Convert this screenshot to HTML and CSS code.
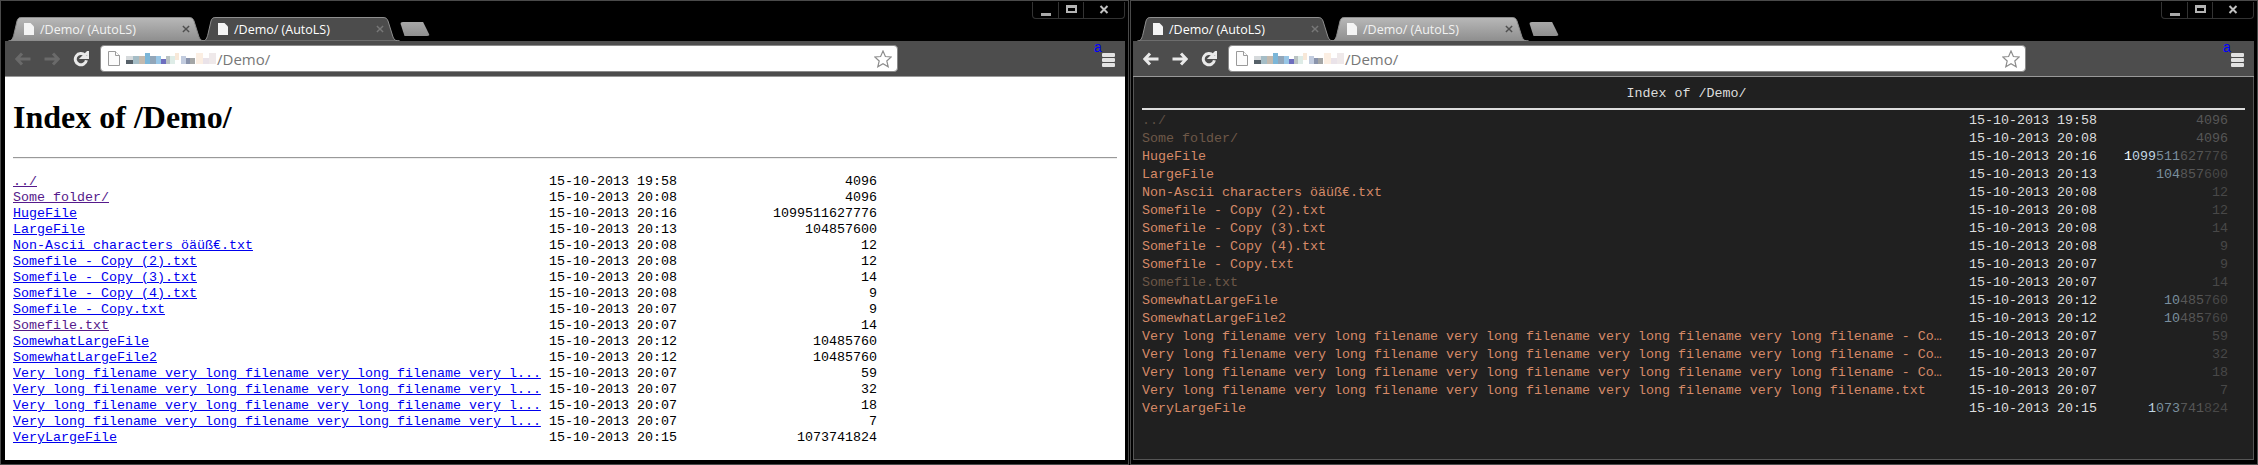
FILE: index.html
```html
<!DOCTYPE html>
<html>
<head>
    <title>/Demo/ (AutoLS)</title>
    <link rel="stylesheet" href="styles.css">
</head>
<body>
    <!-- Shared icons -->
    <svg class="defs" width="0" height="0">
        <linearGradient id="tab-fill" x1="0" y1="0" x2="0" y2="1">
            <stop offset="0" stop-color="#b8b8b8"/>
            <stop offset="1" stop-color="#8e8e8e"/>
        </linearGradient>
        <symbol id="i-tab" viewBox="0 0 198 24" preserveAspectRatio="none">
            <path d="M0.5 24 C4 24 5 21 6 17 L9 4 C10 1 11 0.5 14 0.5 H181 C184 0.5 185 1.5 186 4 L191 20 C192 23 194 24 197.5 24 Z"/>
        </symbol>
        <symbol id="i-page" viewBox="0 0 10 12">
            <path d="M0 0 H6.5 L10 3.5 V12 H0 Z"/>
        </symbol>
        <symbol id="i-x" viewBox="0 0 9 9">
            <path d="M1 1 L8 8 M8 1 L1 8"/>
        </symbol>
        <symbol id="i-back" viewBox="0 0 16 14">
            <path d="M7 1.5 L1.8 7 L7 12.5 M2 7 H15.5"/>
        </symbol>
        <symbol id="i-forward" viewBox="0 0 16 14">
            <path d="M9 1.5 L14.2 7 L9 12.5 M14 7 H0.5"/>
        </symbol>
        <symbol id="i-reload" viewBox="0 0 16 16">
            <path class="arc" d="M12 4.4 A5.6 5.6 0 1 0 13.4 9.2"/>
            <path class="head" d="M9.5 6.6 L15.6 6.6 L15.6 0.6 Z"/>
        </symbol>
        <symbol id="i-doc" viewBox="0 0 12 15">
            <path d="M0.5 0.5 H7.5 L11.5 4.5 V14.5 H0.5 Z"/>
            <path d="M7.5 0.5 V4.5 H11.5"/>
        </symbol>
        <symbol id="i-star" viewBox="0 0 18 18">
            <path d="M9 1 L11.4 6.5 L17.2 7 L12.8 11 L14.2 16.8 L9 13.7 L3.8 16.8 L5.2 11 L0.8 7 L6.6 6.5 Z"/>
        </symbol>
        <symbol id="i-host" viewBox="0 0 91 12">
            <rect x="0" y="3" width="7" height="4" fill="#cdd2d4"/>
            <rect x="0" y="7" width="7" height="4" fill="#2c3a44"/>
            <rect x="7" y="3" width="6" height="8" fill="#8fadb8"/>
            <rect x="13" y="3" width="7" height="8" fill="#b5aa9c"/>
            <rect x="19" y="0" width="5" height="11" fill="#5ba5cf"/>
            <rect x="24" y="3" width="6" height="8" fill="#7890a8"/>
            <rect x="30" y="3" width="5" height="8" fill="#7fb9e0"/>
            <rect x="35" y="6" width="5" height="5" fill="#4a4bae"/>
            <rect x="40" y="3" width="4" height="8" fill="#a9b5b5"/>
            <rect x="44" y="3" width="5" height="8" fill="#d6e8e2"/>
            <rect x="49" y="0" width="4" height="7" fill="#f7e3cf"/>
            <rect x="55" y="3" width="5" height="8" fill="#b4c0d8"/>
            <rect x="60" y="5" width="4" height="6" fill="#6d7a98"/>
            <rect x="64" y="5" width="5" height="6" fill="#8e9090"/>
            <rect x="70" y="0" width="7" height="11" fill="#fbeadb"/>
            <rect x="77" y="5" width="6" height="6" fill="#e5dde4"/>
            <rect x="83" y="0" width="7" height="11" fill="#ece4e6"/>
        </symbol>
    </svg>

    <!-- Left window: default listing -->
    <div class="window window-left">
        <div class="titlebar">
            <div class="tabs">
                <div class="tab">
                    <svg class="tab-bg"><use href="#i-tab" fill="url(#tab-fill)"/></svg>
                    <svg class="tab-icon"><use href="#i-page"/></svg>
                    <span class="tab-title">/Demo/ (AutoLS)</span>
                    <svg class="tab-close"><use href="#i-x"/></svg>
                </div>
                <div class="tab tab-active">
                    <svg class="tab-bg"><use href="#i-tab"/></svg>
                    <svg class="tab-icon"><use href="#i-page"/></svg>
                    <span class="tab-title">/Demo/ (AutoLS)</span>
                    <svg class="tab-close"><use href="#i-x"/></svg>
                </div>
                <div class="new-tab"></div>
            </div>
            <div class="caption">
                <div class="cap-btn cap-min"><span></span></div>
                <div class="cap-btn cap-max"><span></span></div>
                <div class="cap-btn cap-close"><svg><use href="#i-x"/></svg></div>
            </div>
        </div>
        <div class="toolbar">
            <svg class="nav nav-off"><use href="#i-back"/></svg>
            <svg class="nav nav-off"><use href="#i-forward"/></svg>
            <svg class="nav reload"><use href="#i-reload"/></svg>
            <div class="omnibox">
                <svg class="doc"><use href="#i-doc"/></svg>
                <svg class="host"><use href="#i-host"/></svg>
                <span class="path">/Demo/</span>
                <svg class="star"><use href="#i-star"/></svg>
            </div>
            <div class="menu"><span class="menu-badge">a</span><i></i><i></i><i></i></div>
        </div>
        <div class="page page-plain">
            <h1>Index of /Demo/</h1>
            <hr>
            <div class="listing">
                <div class="row"><a class="seen">../</a><span>15-10-2013 19:58</span><span class="size">4096</span></div>
                <div class="row"><a class="seen">Some folder/</a><span>15-10-2013 20:08</span><span class="size">4096</span></div>
                <div class="row"><a>HugeFile</a><span>15-10-2013 20:16</span><span class="size">1099511627776</span></div>
                <div class="row"><a>LargeFile</a><span>15-10-2013 20:13</span><span class="size">104857600</span></div>
                <div class="row"><a>Non-Ascii characters öäüß€.txt</a><span>15-10-2013 20:08</span><span class="size">12</span></div>
                <div class="row"><a>Somefile - Copy (2).txt</a><span>15-10-2013 20:08</span><span class="size">12</span></div>
                <div class="row"><a>Somefile - Copy (3).txt</a><span>15-10-2013 20:08</span><span class="size">14</span></div>
                <div class="row"><a>Somefile - Copy (4).txt</a><span>15-10-2013 20:08</span><span class="size">9</span></div>
                <div class="row"><a>Somefile - Copy.txt</a><span>15-10-2013 20:07</span><span class="size">9</span></div>
                <div class="row"><a class="seen">Somefile.txt</a><span>15-10-2013 20:07</span><span class="size">14</span></div>
                <div class="row"><a>SomewhatLargeFile</a><span>15-10-2013 20:12</span><span class="size">10485760</span></div>
                <div class="row"><a>SomewhatLargeFile2</a><span>15-10-2013 20:12</span><span class="size">10485760</span></div>
                <div class="row"><a>Very long filename very long filename very long filename very l...</a><span>15-10-2013 20:07</span><span class="size">59</span></div>
                <div class="row"><a>Very long filename very long filename very long filename very l...</a><span>15-10-2013 20:07</span><span class="size">32</span></div>
                <div class="row"><a>Very long filename very long filename very long filename very l...</a><span>15-10-2013 20:07</span><span class="size">18</span></div>
                <div class="row"><a>Very long filename very long filename very long filename very l...</a><span>15-10-2013 20:07</span><span class="size">7</span></div>
                <div class="row"><a>VeryLargeFile</a><span>15-10-2013 20:15</span><span class="size">1073741824</span></div>
            </div>
        </div>
    </div>

    <!-- Right window: AutoLS listing -->
    <div class="window window-right">
        <div class="titlebar">
            <div class="tabs">
                <div class="tab tab-active">
                    <svg class="tab-bg"><use href="#i-tab"/></svg>
                    <svg class="tab-icon"><use href="#i-page"/></svg>
                    <span class="tab-title">/Demo/ (AutoLS)</span>
                    <svg class="tab-close"><use href="#i-x"/></svg>
                </div>
                <div class="tab">
                    <svg class="tab-bg"><use href="#i-tab" fill="url(#tab-fill)"/></svg>
                    <svg class="tab-icon"><use href="#i-page"/></svg>
                    <span class="tab-title">/Demo/ (AutoLS)</span>
                    <svg class="tab-close"><use href="#i-x"/></svg>
                </div>
                <div class="new-tab"></div>
            </div>
            <div class="caption">
                <div class="cap-btn cap-min"><span></span></div>
                <div class="cap-btn cap-max"><span></span></div>
                <div class="cap-btn cap-close"><svg><use href="#i-x"/></svg></div>
            </div>
        </div>
        <div class="toolbar">
            <svg class="nav"><use href="#i-back"/></svg>
            <svg class="nav"><use href="#i-forward"/></svg>
            <svg class="nav reload"><use href="#i-reload"/></svg>
            <div class="omnibox">
                <svg class="doc"><use href="#i-doc"/></svg>
                <svg class="host"><use href="#i-host"/></svg>
                <span class="path">/Demo/</span>
                <svg class="star"><use href="#i-star"/></svg>
            </div>
            <div class="menu"><span class="menu-badge">a</span><i></i><i></i><i></i></div>
        </div>
        <div class="page page-dark">
            <div class="dark-title">Index of /Demo/</div>
            <hr>
            <div class="listing">
                <div class="row"><a class="faint">../</a><span>15-10-2013 19:58</span><span class="size"><b class="g1">4096</b></span></div>
                <div class="row"><a class="seen">Some folder/</a><span>15-10-2013 20:08</span><span class="size"><b class="g1">4096</b></span></div>
                <div class="row"><a>HugeFile</a><span>15-10-2013 20:16</span><span class="size"><b class="g4">1</b><b class="g3">099</b><b class="g2">511</b><b class="g1">627</b><b class="g0">776</b></span></div>
                <div class="row"><a>LargeFile</a><span>15-10-2013 20:13</span><span class="size"><b class="g2">104</b><b class="g1">857</b><b class="g0">600</b></span></div>
                <div class="row"><a>Non-Ascii characters öäüß€.txt</a><span>15-10-2013 20:08</span><span class="size"><b class="g0">12</b></span></div>
                <div class="row"><a>Somefile - Copy (2).txt</a><span>15-10-2013 20:08</span><span class="size"><b class="g0">12</b></span></div>
                <div class="row"><a>Somefile - Copy (3).txt</a><span>15-10-2013 20:08</span><span class="size"><b class="g0">14</b></span></div>
                <div class="row"><a>Somefile - Copy (4).txt</a><span>15-10-2013 20:08</span><span class="size"><b class="g0">9</b></span></div>
                <div class="row"><a>Somefile - Copy.txt</a><span>15-10-2013 20:07</span><span class="size"><b class="g0">9</b></span></div>
                <div class="row"><a class="seen">Somefile.txt</a><span>15-10-2013 20:07</span><span class="size"><b class="g0">14</b></span></div>
                <div class="row"><a>SomewhatLargeFile</a><span>15-10-2013 20:12</span><span class="size"><b class="g2">10</b><b class="g1">485</b><b class="g0">760</b></span></div>
                <div class="row"><a>SomewhatLargeFile2</a><span>15-10-2013 20:12</span><span class="size"><b class="g2">10</b><b class="g1">485</b><b class="g0">760</b></span></div>
                <div class="row"><a>Very long filename very long filename very long filename very long filename very long filename - Co…</a><span>15-10-2013 20:07</span><span class="size"><b class="g0">59</b></span></div>
                <div class="row"><a>Very long filename very long filename very long filename very long filename very long filename - Co…</a><span>15-10-2013 20:07</span><span class="size"><b class="g0">32</b></span></div>
                <div class="row"><a>Very long filename very long filename very long filename very long filename very long filename - Co…</a><span>15-10-2013 20:07</span><span class="size"><b class="g0">18</b></span></div>
                <div class="row"><a>Very long filename very long filename very long filename very long filename very long filename.txt</a><span>15-10-2013 20:07</span><span class="size"><b class="g0">7</b></span></div>
                <div class="row"><a>VeryLargeFile</a><span>15-10-2013 20:15</span><span class="size"><b class="g3">1</b><b class="g2">073</b><b class="g1">741</b><b class="g0">824</b></span></div>
            </div>
        </div>
    </div>
</body>
</html>
```

FILE: styles.css
```css
* {
    box-sizing: border-box;
}
html, body {
    margin: 0;
    height: 465px;
    overflow: hidden;
}
body {
    display: flex;
    justify-content: space-between;
    background-color: #000;
    font-family: "Liberation Mono", monospace;
}
.defs {
    position: absolute;
}

/* Window frame */
.window {
    display: flex;
    flex-direction: column;
    height: 465px;
    border: 1px solid #4a4a4a;
    background-color: #000;
}
.window-left {
    width: 1129px;
    padding: 0 3px 4px 4px;
}
.window-right {
    width: 1128px;
    padding: 0 3px 4px 2px;
}

/* Title bar and tabs */
.titlebar {
    display: flex;
    justify-content: space-between;
    height: 40px;
}
.tabs {
    display: flex;
    align-items: flex-end;
    padding-left: 3px;
}
.window-right .tabs {
    padding-left: 4px;
}
.tab {
    position: relative;
    display: flex;
    align-items: center;
    width: 198px;
    height: 24px;
    padding-left: 16px;
    margin-right: -4px;
    font-family: "Open Sans", sans-serif;
    font-size: 12.5px;
}
.tab-bg {
    position: absolute;
    left: 0;
    top: 0;
    width: 198px;
    height: 24px;
    stroke: #8a8a8a;
}
.tab-active {
    z-index: 1;
}
.tab-active .tab-bg {
    fill: #4c4c4c;
    stroke: #8f8f8f;
}
.tab-icon {
    position: relative;
    width: 10px;
    height: 12px;
    margin-right: 6px;
    fill: #f4f4f4;
}
.tab-title {
    position: relative;
    color: #f2f2f2;
    white-space: nowrap;
}
.tab-active .tab-title {
    color: #fff;
}
.tab-close {
    position: absolute;
    right: 16px;
    top: 8px;
    width: 8px;
    height: 8px;
    fill: none;
    stroke: #4f4f4f;
    stroke-width: 1.6;
}
.tab-active .tab-close {
    stroke: #777;
}
.new-tab {
    width: 30px;
    height: 14px;
    margin: 0 0 5px 4px;
    background: linear-gradient(#a8a8a8, #8e8e8e);
    border-radius: 3px;
    clip-path: polygon(0 0, 77% 0, 100% 100%, 15% 100%);
}

/* Caption buttons */
.caption {
    display: flex;
    height: 17px;
    margin-top: 1px;
    border: 1px solid #333;
    border-top: 0;
    border-radius: 0 0 4px 4px;
}
.cap-btn {
    display: flex;
    align-items: center;
    justify-content: center;
    width: 25px;
    border-left: 1px solid #333;
}
.cap-btn:first-child {
    border-left: 0;
}
.cap-close {
    width: 41px;
}
.cap-min span {
    width: 10px;
    height: 3px;
    margin-top: 9px;
    background-color: #aaa;
}
.cap-max span {
    width: 11px;
    height: 8px;
    margin-top: -2px;
    border: 2px solid #b4b4b4;
    border-top-width: 3px;
}
.cap-close svg {
    width: 10px;
    height: 9px;
    margin-top: -2px;
    fill: none;
    stroke: #c0c0c0;
    stroke-width: 2;
}

/* Toolbar */
.toolbar {
    display: flex;
    align-items: center;
    gap: 13px;
    height: 36px;
    padding: 0 10px;
    background-color: #4d4d4d;
    border-bottom: 1px solid #999;
}
.nav {
    flex: none;
    width: 16px;
    height: 14px;
    fill: none;
    stroke: #e9e9e9;
    stroke-width: 3;
}
.nav-off {
    stroke: #6a6a6a;
}
.reload {
    height: 16px;
    stroke-width: 3;
}
.reload .head {
    fill: #e9e9e9;
    stroke: none;
}
.omnibox {
    display: flex;
    align-items: center;
    width: 798px;
    height: 27px;
    margin-left: -2px;
    padding: 0 5px 0 7px;
    background-color: #fff;
    border: 1px solid #8a8a8a;
    border-radius: 4px;
}
.doc {
    width: 12px;
    height: 15px;
    margin-right: 6px;
    fill: #fbfbfb;
    stroke: #9a9a9a;
}
.host {
    width: 91px;
    height: 12px;
    opacity: 0.8;
}
.path {
    font-family: "Open Sans", sans-serif;
    font-size: 15px;
    color: #777;
}
.star {
    width: 18px;
    height: 18px;
    margin-left: auto;
    fill: #fff;
    stroke: #8d8d8d;
    stroke-width: 1.2;
}
.menu {
    position: relative;
    display: flex;
    flex-direction: column;
    gap: 1px;
    width: 13px;
    margin-left: auto;
    margin-top: 3px;
}
.menu i {
    height: 4px;
    background-color: #e2e2e2;
    border-radius: 1px;
}
.menu-badge {
    position: absolute;
    left: -8px;
    top: -13px;
    font-family: "Liberation Sans", sans-serif;
    font-size: 14px;
    line-height: 14px;
    color: #00f;
}

/* Page content */
.page {
    flex: 1;
    padding: 0 8px;
    font-size: 13.33px;
}
.page-plain {
    background-color: #fff;
    color: #000;
}
.page-plain h1 {
    margin: 0;
    padding-top: 22px;
    font-family: "Liberation Serif", serif;
    font-size: 32px;
    line-height: 37px;
}
.page-plain hr {
    height: 2px;
    margin: 21px 0 15px;
    border: 0;
    border-top: 1px solid #999;
    border-bottom: 1px solid #eee;
}
.page-dark {
    background-color: #202020;
    color: #ddd;
    border: 1px solid #555;
    border-top: 0;
}
.dark-title {
    padding: 8px 14px 0 0;
    line-height: 18px;
    text-align: center;
}
.page-dark hr {
    height: 2px;
    margin: 5px 0 2px;
    border: 0;
    background-color: #ddd;
}

/* Listing rows */
.row {
    display: grid;
    white-space: nowrap;
}
.page-plain .row {
    grid-template-columns: 536px 128px 200px;
    line-height: 16px;
}
.page-dark .row {
    grid-template-columns: 800px 128px 158px;
    line-height: 18px;
}
.page-dark .row span:nth-child(2) {
    margin-left: 27px;
}
.page-plain a {
    justify-self: start;
    color: #00e;
    text-decoration: underline;
}
.page-plain a.seen {
    color: #551a8b;
}
.page-dark a {
    color: #d68a68;
}
.page-dark a.seen {
    color: #6e5848;
}
.page-dark a.faint {
    color: #5e4f44;
}
.size {
    text-align: right;
}
.size b {
    font-weight: normal;
}
.g0 { color: #484848; }
.g1 { color: #575757; }
.g2 { color: #7a8f9e; }
.g3 { color: #c0d6e2; }
.g4 { color: #f4fbff; }
```
